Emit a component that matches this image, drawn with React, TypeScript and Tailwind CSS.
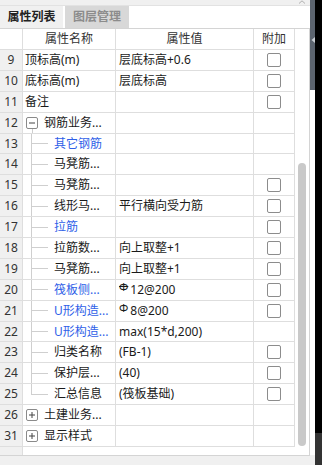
import React from "react";

type Row = {
  n: string;
  name: string;
  val?: React.ReactNode;
  cb?: boolean;
  blue?: boolean;
  child?: boolean;
  last?: boolean;
  group?: "open" | "closed";
};

const GRID = "border-[#dedede]";

function Glyph({ kind }: { kind: "a" | "c" }) {
  return (
    <span
      className={`relative -top-[3px] mr-[2px] inline-block text-[11px] leading-none ${
        kind === "c" ? "line-through" : ""
      }`}
    >
      Φ
    </span>
  );
}

const rows: Row[] = [
  { n: "9", name: "顶标高(m)", val: "层底标高+0.6", cb: true },
  { n: "10", name: "底标高(m)", val: "层底标高", cb: true },
  { n: "11", name: "备注", cb: true },
  { n: "12", name: "钢筋业务...", group: "open" },
  { n: "13", name: "其它钢筋", child: true, blue: true },
  { n: "14", name: "马凳筋...", child: true },
  { n: "15", name: "马凳筋...", child: true, cb: true },
  { n: "16", name: "线形马...", val: "平行横向受力筋", child: true, cb: true },
  { n: "17", name: "拉筋", child: true, blue: true, cb: true },
  { n: "18", name: "拉筋数...", val: "向上取整+1", child: true, cb: true },
  { n: "19", name: "马凳筋...", val: "向上取整+1", child: true, cb: true },
  {
    n: "20",
    name: "筏板侧...",
    val: (
      <>
        <Glyph kind="c" />
        12@200
      </>
    ),
    child: true,
    blue: true,
    cb: true,
  },
  {
    n: "21",
    name: "U形构造...",
    val: (
      <>
        <Glyph kind="a" />
        8@200
      </>
    ),
    child: true,
    blue: true,
    cb: true,
  },
  { n: "22", name: "U形构造...", val: "max(15*d,200)", child: true, blue: true },
  { n: "23", name: "归类名称", val: "(FB-1)", child: true, cb: true },
  { n: "24", name: "保护层...", val: "(40)", child: true, cb: true },
  { n: "25", name: "汇总信息", val: "(筏板基础)", child: true, last: true, cb: true },
  { n: "26", name: "土建业务...", group: "closed" },
  { n: "31", name: "显示样式", group: "closed" },
];

function ToggleBox({ open }: { open: boolean }) {
  return (
    <div className="relative ml-[3px] mr-[6px] h-[12px] w-[12px] shrink-0 rounded-[2px] border border-[#8a8a8a] bg-white">
      <svg viewBox="0 0 10 10" className="absolute inset-0 h-full w-full">
        <line x1="2" y1="5" x2="8" y2="5" stroke="#444" strokeWidth="1" />
        {!open && <line x1="5" y1="2" x2="5" y2="8" stroke="#444" strokeWidth="1" />}
      </svg>
      {open && <div className="absolute left-[5px] top-[11px] h-[6px] w-px bg-[#cfcfcf]" />}
    </div>
  );
}

function NameCell({ row }: { row: Row }) {
  const color = row.blue ? "text-[#2f5fe8]" : "text-[#1a1a1a]";
  return (
    <div className={`flex h-full w-[93px] shrink-0 items-center overflow-hidden border-r ${GRID} whitespace-nowrap`}>
      {row.group && (
        <>
          <ToggleBox open={row.group === "open"} />
          <span className={color}>{row.name}</span>
        </>
      )}
      {row.child && (
        <>
          <div className="ml-[8px] flex h-full w-[17px] shrink-0 flex-col">
            <div className="flex-1 border-b border-l border-[#cfcfcf]" />
            <div className={`flex-1 ${row.last ? "" : "border-l border-[#cfcfcf]"}`} />
          </div>
          <span className={`ml-[6px] ${color}`}>{row.name}</span>
        </>
      )}
      {!row.group && !row.child && <span className={`ml-[2px] ${color}`}>{row.name}</span>}
    </div>
  );
}

function Checkbox() {
  return <div className="h-[14px] w-[14px] rounded-[2px] border border-[#8c8c8c] bg-white" />;
}

function TableRow({ row }: { row: Row }) {
  return (
    <div className={`flex h-[20.9px] border-b ${GRID}`}>
      <div className={`flex h-full w-[23px] shrink-0 items-center justify-center border-r ${GRID} bg-[#f0f0f0] text-[#333]`}>
        {row.n}
      </div>
      <NameCell row={row} />
      <div className={`flex h-full w-[138px] shrink-0 items-center overflow-hidden whitespace-nowrap border-r ${GRID} pl-[3px] text-[#1a1a1a]`}>
        {row.val}
      </div>
      <div className={`flex h-full w-[41px] shrink-0 items-center justify-center border-r ${GRID}`}>
        {row.cb && <Checkbox />}
      </div>
    </div>
  );
}

export default function App() {
  return (
    <div className="flex h-[465px] w-[322px] overflow-hidden bg-[#f0f0f0] font-['Noto_Sans','Noto_Sans_CJK_SC',sans-serif] text-[12px]">
      <div className="flex w-[310px] shrink-0 flex-col">
        <div className="flex h-[6px] shrink-0 justify-end border-b border-[#e2e2e2] bg-[#f0f0f0] pr-[4px]">
          <svg viewBox="0 0 8 4" className="h-[4px] w-[8px]">
            <polyline points="1,3.5 4,0.8 7,3.5" fill="none" stroke="#b0b0b0" strokeWidth="1" />
          </svg>
        </div>
        <div className="flex h-[22px] shrink-0 bg-white">
          <div className="flex w-[63px] items-center justify-center bg-[#f0f0f0] font-bold text-[#222]">属性列表</div>
          <div className="ml-[2px] flex w-[64px] items-center justify-center bg-[#d8d8d8] font-bold text-[#8c8c8c]">
            图层管理
          </div>
        </div>
        <div className="flex h-[428px] shrink-0 border-b border-r border-t border-[#d4d4d4] bg-white">
          <div className="flex w-[295px] shrink-0 flex-col">
            <div className={`flex h-[21px] shrink-0 border-b ${GRID} text-[#333]`}>
              <div className={`w-[23px] shrink-0 border-r ${GRID}`} />
              <div className={`flex w-[93px] shrink-0 items-center justify-center border-r ${GRID}`}>属性名称</div>
              <div className={`flex w-[138px] shrink-0 items-center justify-center border-r ${GRID}`}>属性值</div>
              <div className={`flex w-[41px] shrink-0 items-center justify-center border-r ${GRID}`}>附加</div>
            </div>
            {rows.map((r) => (
              <TableRow key={r.n} row={r} />
            ))}
            <div className="flex flex-1">
              <div className={`w-[23px] border-r ${GRID} bg-[#f0f0f0]`} />
            </div>
          </div>
          <div className="flex flex-1 flex-col items-center pt-[134px]">
            <div className="h-[283px] w-[8px] rounded-[4px] bg-[#c9c9c9]" />
          </div>
        </div>
      </div>
      <div className="flex w-[5px] shrink-0 flex-col">
        <div className="flex h-[90px] items-center justify-center bg-[#5c646f] pb-[10px]">
          <svg viewBox="0 0 4 6" className="h-[6px] w-[4px]">
            <polygon points="4,0 4,6 0.5,3" fill="#c7ccd2" />
          </svg>
        </div>
        <div className="h-[365px] bg-white" />
        <div className="flex-1 bg-[#f0f0f0]" />
      </div>
      <div className="flex flex-1 flex-col">
        <div className="h-[433px] bg-black" />
        <div className="flex-1 bg-[#333]" />
      </div>
    </div>
  );
}
